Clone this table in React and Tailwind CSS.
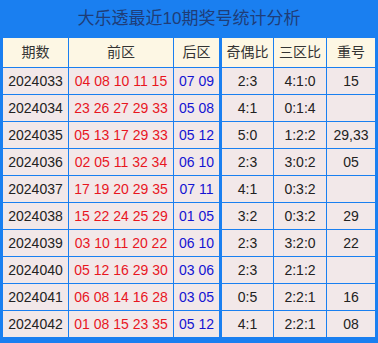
import React from 'react';

const rows = [
  ["2024033", "04 08 10 11 15", "07 09", "2:3", "4:1:0", "15"],
  ["2024034", "23 26 27 29 33", "05 08", "4:1", "0:1:4", ""],
  ["2024035", "05 13 17 29 33", "05 12", "5:0", "1:2:2", "29,33"],
  ["2024036", "02 05 11 32 34", "06 10", "2:3", "3:0:2", "05"],
  ["2024037", "17 19 20 29 35", "07 11", "4:1", "0:3:2", ""],
  ["2024038", "15 22 24 25 29", "01 05", "3:2", "0:3:2", "29"],
  ["2024039", "03 10 11 20 22", "06 10", "2:3", "3:2:0", "22"],
  ["2024040", "05 12 16 29 30", "03 06", "2:3", "2:1:2", ""],
  ["2024041", "06 08 14 16 28", "03 05", "0:5", "2:2:1", "16"],
  ["2024042", "01 08 15 23 35", "05 12", "4:1", "2:2:1", "08"],
];

const headers = ["期数", "前区", "后区", "奇偶比", "三区比", "重号"];

function App() {
  return (
    <div
      className="w-[378px] h-[343px] bg-[#1a7ff0] px-[3px] pb-[6px]"
      style={{ fontFamily: '"Liberation Sans", "Noto Sans CJK SC", sans-serif' }}
    >
      <div className="h-[38px] flex items-center justify-center text-[17px] text-[#1f3d78]">
        大乐透最近10期奖号统计分析
      </div>
      <div className="grid grid-cols-[65px_104px_45px_53px_52px_48px] grid-rows-[29px_repeat(10,26px)] gap-[1px] text-[14px] text-[#222]">
        {headers.map((h, i) => (
          <div
            key={h}
            className={`bg-[#fdf7e4] flex items-center justify-center text-[#333] ${i === 3 ? 'ml-[2px]' : ''}`}
          >
            {h}
          </div>
        ))}
        {rows.map((r) => (
          <React.Fragment key={r[0]}>
            <div className="bg-[#f2e8e9] flex items-center justify-center">{r[0]}</div>
            <div className="bg-[#f2e8e9] flex items-center justify-center text-[#e8161f]">{r[1]}</div>
            <div className="bg-[#f2e8e9] flex items-center justify-center text-[#1414d2]">{r[2]}</div>
            <div className="bg-[#f2e8e9] flex items-center justify-center ml-[2px]">{r[3]}</div>
            <div className="bg-[#f2e8e9] flex items-center justify-center">{r[4]}</div>
            <div className="bg-[#f2e8e9] flex items-center justify-center">{r[5]}</div>
          </React.Fragment>
        ))}
      </div>
    </div>
  );
}

export default App;
